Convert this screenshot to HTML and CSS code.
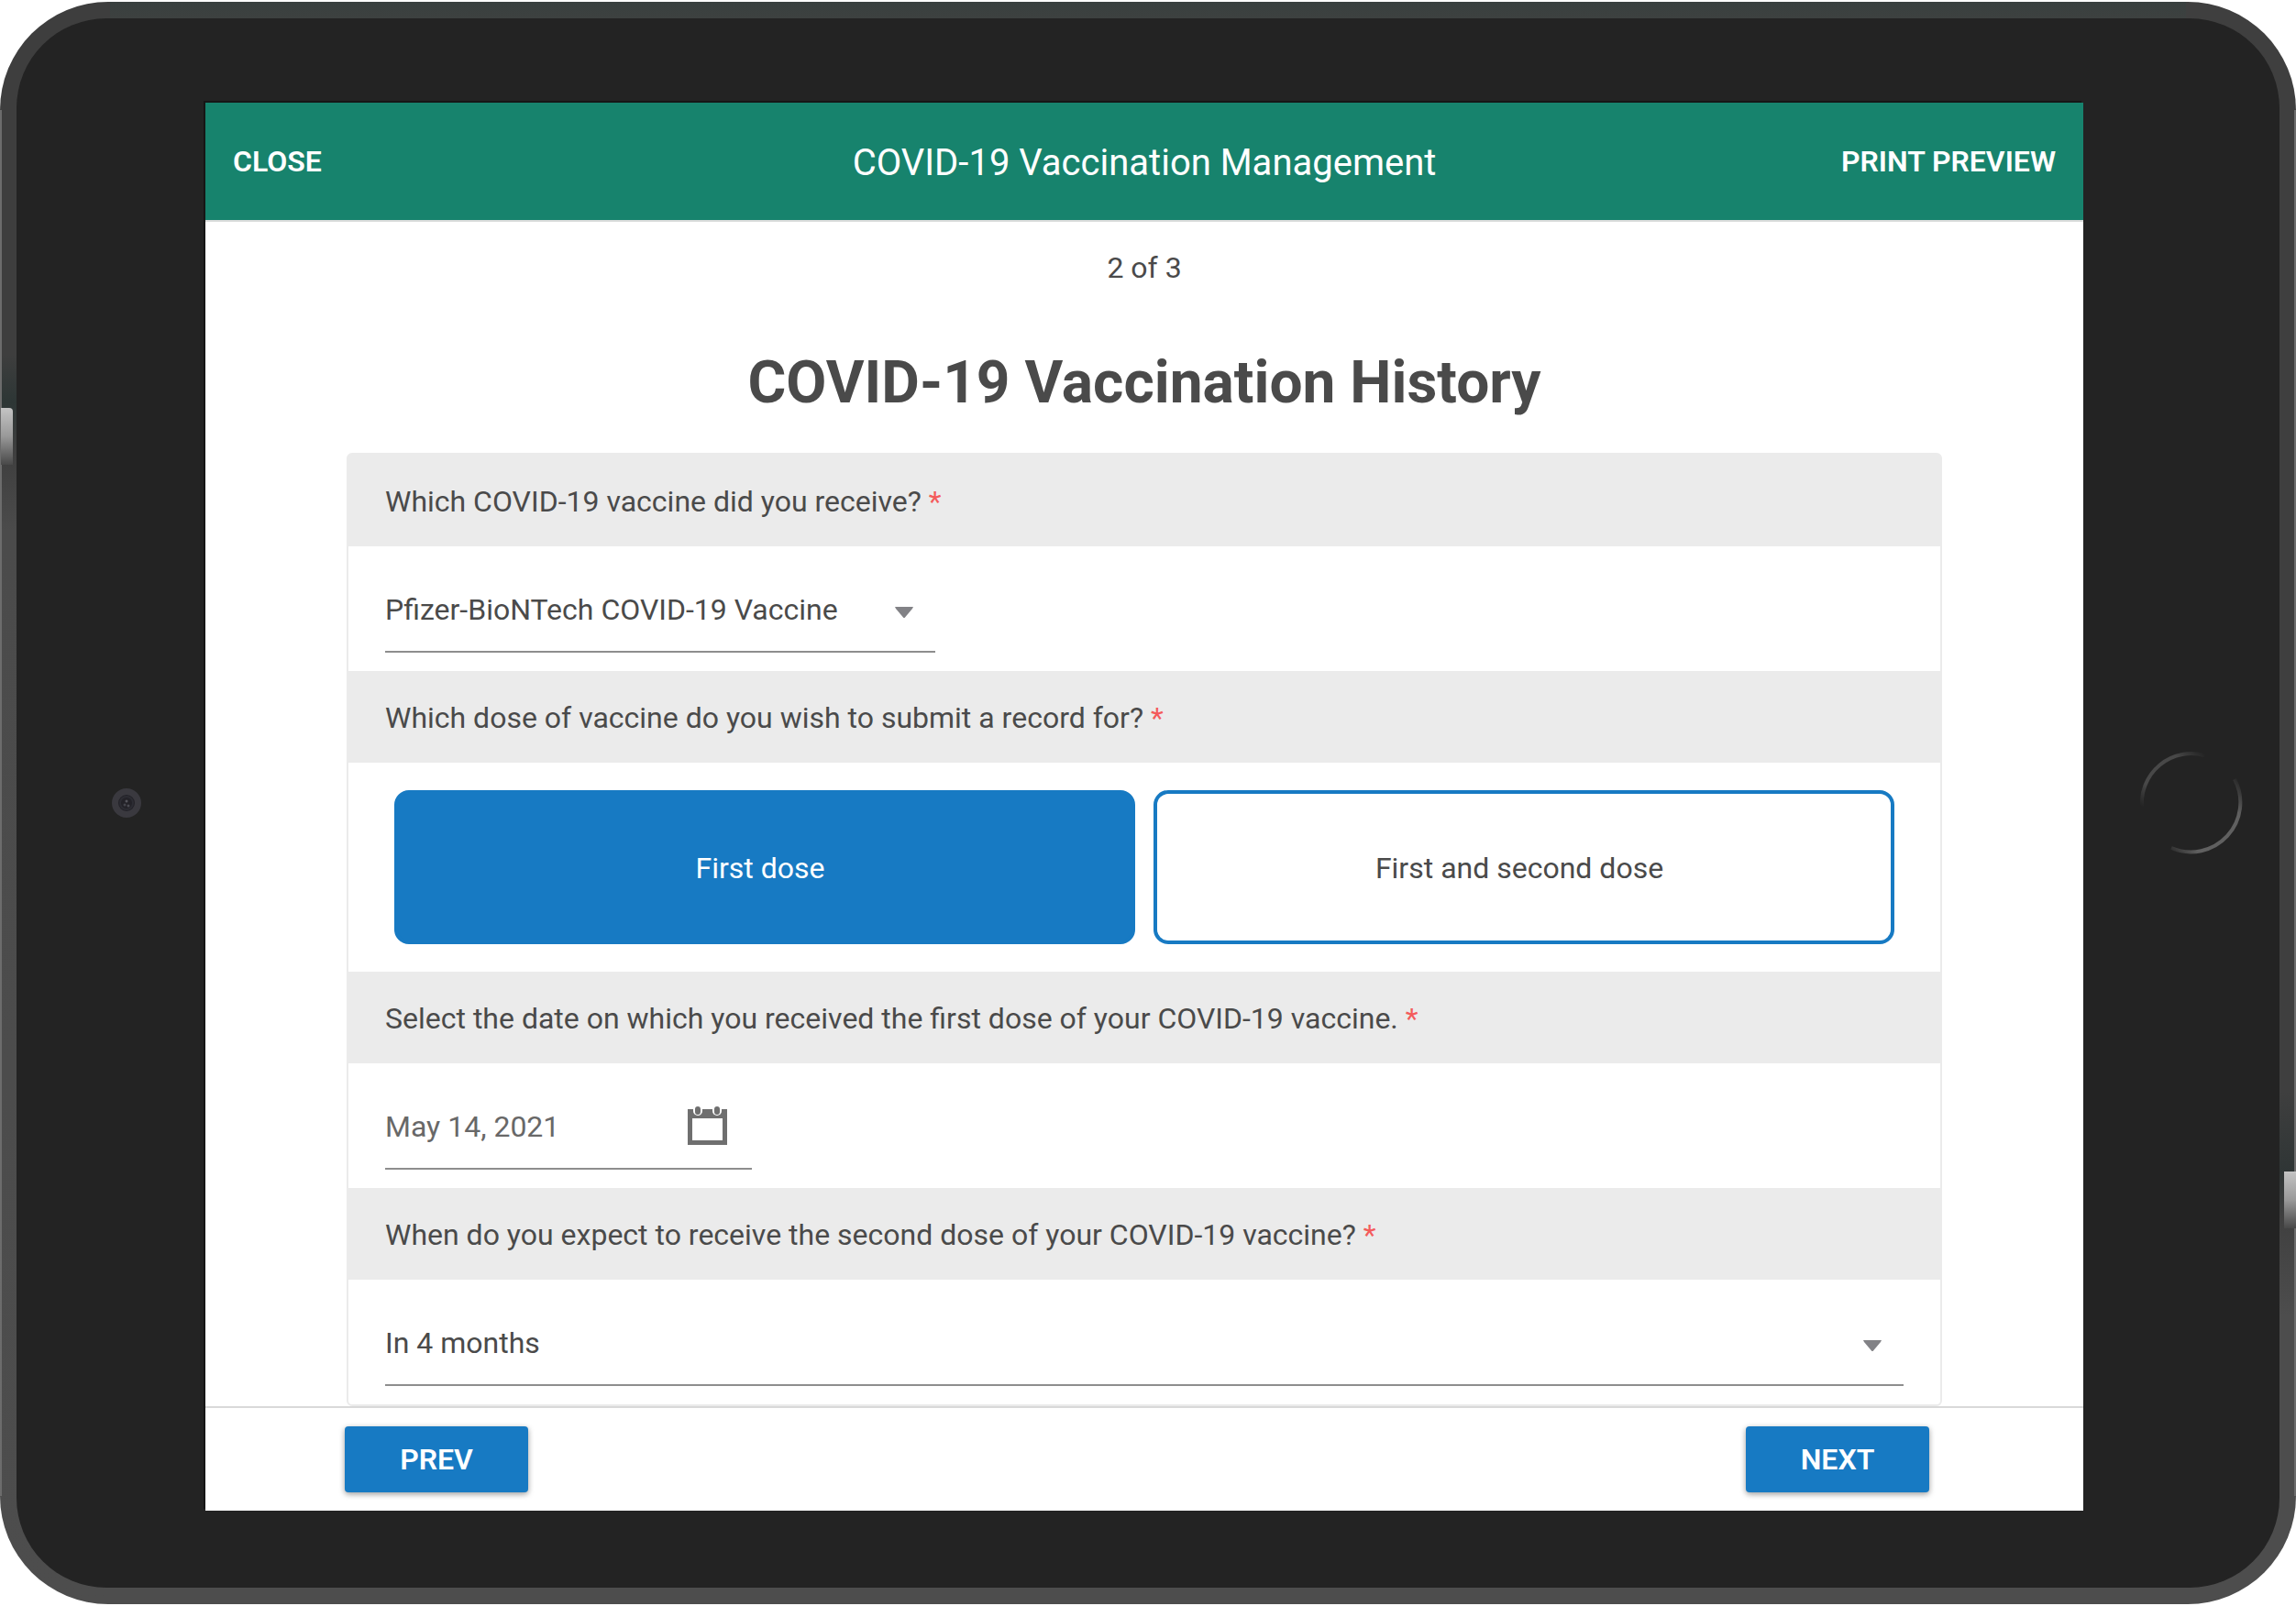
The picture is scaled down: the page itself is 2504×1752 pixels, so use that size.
FILE: index.html
```
<!DOCTYPE html>
<html lang="en">
<head>
<meta charset="utf-8">
<meta name="viewport" content="width=device-width, initial-scale=1">
<title>COVID-19 Vaccination Management</title>
<link rel="stylesheet" href="styles.css">
</head>
<body>
<div class="tablet">
  <div class="bezel">
    <div class="side side-left">
      <svg class="camera" viewBox="0 0 34 34" aria-hidden="true">
        <circle cx="17" cy="17" r="12.5" fill="#232228" stroke="#3a393f" stroke-width="7"/>
        <circle cx="17" cy="17" r="7" fill="none" stroke="#2c2c33" stroke-width="2"/>
        <circle cx="17" cy="15" r="1.5" fill="#55555c"/>
        <circle cx="15" cy="19" r="1.5" fill="#44444b"/>
        <circle cx="19" cy="20" r="1.5" fill="#4b4b52"/>
      </svg>
    </div>
    <div class="screen">
      <header class="app-bar">
        <button class="bar-action" type="button">CLOSE</button>
        <p class="app-title">COVID-19 Vaccination Management</p>
        <button class="bar-action bar-action-end" type="button">PRINT PREVIEW</button>
      </header>
      <main class="page">
        <p class="progress">2 of 3</p>
        <h1 class="page-title">COVID-19 Vaccination History</h1>
        <form class="card" id="history">
          <label class="question" for="vaccine">Which COVID-19 vaccine did you receive? <span class="required">*</span></label>
          <div class="answer">
            <div class="field field-medium">
              <select class="control" id="vaccine">
                <option>Pfizer-BioNTech COVID-19 Vaccine</option>
              </select>
              <svg class="arrow" viewBox="0 0 20 12" aria-hidden="true"><path d="M0 0h20l-1 2-8 9.500q-1 1-2 0L1 2z" fill="#828286"/></svg>
            </div>
          </div>
          <p class="question" id="dose-label">Which dose of vaccine do you wish to submit a record for? <span class="required">*</span></p>
          <div class="choices" role="group" aria-labelledby="dose-label">
            <button class="choice choice-selected" type="button" aria-pressed="true">First dose</button>
            <button class="choice" type="button" aria-pressed="false">First and second dose</button>
          </div>
          <label class="question" for="first-date">Select the date on which you received the first dose of your COVID-19 vaccine. <span class="required">*</span></label>
          <div class="answer">
            <div class="field field-small">
              <input class="control control-date" id="first-date" type="text" value="May 14, 2021">
              <button class="date-button" type="button" aria-label="Open calendar">
                <svg class="calendar" viewBox="0 0 44 44" aria-hidden="true">
                  <path fill="#6f6f6f" fill-rule="evenodd" d="M0 4h43v39H0zM5 14v24h33V14z"/>
                  <rect x="6" y="-1" width="10" height="12" rx="5" fill="#fff"/>
                  <rect x="27" y="-1" width="10" height="12" rx="5" fill="#fff"/>
                  <rect x="8" y="1" width="6" height="9" rx="3" fill="#6f6f6f"/>
                  <rect x="29" y="1" width="6" height="9" rx="3" fill="#6f6f6f"/>
                </svg>
              </button>
            </div>
          </div>
          <label class="question" for="second-dose">When do you expect to receive the second dose of your COVID-19 vaccine? <span class="required">*</span></label>
          <div class="answer">
            <div class="field">
              <select class="control" id="second-dose">
                <option>In 4 months</option>
              </select>
              <svg class="arrow" viewBox="0 0 20 12" aria-hidden="true"><path d="M0 0h20l-1 2-8 9.500q-1 1-2 0L1 2z" fill="#828286"/></svg>
            </div>
          </div>
        </form>
      </main>
      <footer class="nav-bar">
        <button class="nav-button" type="button">PREV</button>
        <button class="nav-button" type="submit" form="history">NEXT</button>
      </footer>
    </div>
    <div class="side side-right">
      <svg class="home" viewBox="0 0 112 112" aria-hidden="true">
        <defs>
          <linearGradient id="arc-top" x1="0" y1="1" x2="1" y2="0">
            <stop offset="0" stop-color="#232323"/>
            <stop offset="0.250" stop-color="#484848"/>
            <stop offset="0.750" stop-color="#484848"/>
            <stop offset="1" stop-color="#232323"/>
          </linearGradient>
          <linearGradient id="arc-bottom" x1="0" y1="1" x2="1" y2="0">
            <stop offset="0" stop-color="#2c2c2c"/>
            <stop offset="0.200" stop-color="#606060"/>
            <stop offset="0.750" stop-color="#606060"/>
            <stop offset="1" stop-color="#232323"/>
          </linearGradient>
        </defs>
        <path d="M2 60A54 54 0 0 1 70 4" fill="none" stroke="url(#arc-top)" stroke-width="4"/>
        <path d="M34 105A54 54 0 0 0 103 30" fill="none" stroke="url(#arc-bottom)" stroke-width="4"/>
      </svg>
    </div>
  </div>
  <span class="glint glint-left"></span>
  <span class="glint glint-right"></span>
</div>
</body>
</html>
```
FILE: styles.css
```
* {
  box-sizing: border-box;
}

body {
  margin: 0;
  padding: 2px 0;
  background: #fff;
  color: #4a4a4a;
  font-family: Roboto, "Liberation Sans", sans-serif;
  font-size: 32px;
  line-height: 40px;
}

p,
h1 {
  margin: 0;
}

button,
input,
select {
  margin: 0;
  padding: 0;
  border: 0;
  background: none;
  color: inherit;
  font: inherit;
}

/* Tablet casing */
.tablet {
  position: relative;
  display: flex;
  min-height: calc(100vh - 4px);
  padding: 18px;
  border-radius: 118px;
  overflow: hidden;
  background:
    linear-gradient(#39403f, #3d4140) center top / calc(100% - 240px) 18px no-repeat,
    linear-gradient(#4d4d4d, #4d4d4d) center bottom / calc(100% - 240px) 18px no-repeat,
    linear-gradient(#6c6c6c, #6c6c6c) left center / 2px calc(100% - 236px) no-repeat,
    linear-gradient(#6c6c6c, #6c6c6c) right center / 2px calc(100% - 236px) no-repeat,
    linear-gradient(#3e3e3e 22%, #2d3635 25%, #3e3e3e 28%, #4b4b4b 33%, #4d4d4d) left top / 50% 100% no-repeat,
    linear-gradient(#3f3f3f 68%, #2f3535 73%, #404040 76%, #4d4d4d 82%) right top / 50% 100% no-repeat;
}

.bezel {
  flex: 1;
  display: grid;
  grid-template-columns: 206px minmax(0, 1fr) 214px;
  border-radius: 98px;
  background: #232323;
}

.side {
  display: flex;
  align-items: center;
  justify-content: center;
}

.side-left {
  padding-left: 34px;
}

.side-right {
  padding-left: 22px;
}

.camera {
  width: 34px;
  height: 34px;
}

.home {
  width: 112px;
  height: 112px;
}

.glint {
  position: absolute;
  width: 13px;
  height: 62px;
  background: linear-gradient(#c4c4c4, #999 50%, #484848);
}

.glint-left {
  left: 1px;
  top: 25%;
  margin-top: 6px;
  border-top-right-radius: 4px;
}

.glint-right {
  right: 0;
  top: 73%;
}

/* Application */
.screen {
  display: flex;
  flex-direction: column;
  margin: 92px 0 84px;
  background: #fff;
  box-shadow: -2px -2px 0 #161616;
}

.app-bar {
  display: grid;
  grid-template-columns: 1fr auto 1fr;
  align-items: center;
  height: 130px;
  padding: 0 30px;
  border-bottom: 2px solid #dadcdb;
  background: #17836d;
  background-clip: padding-box;
  color: #fff;
}

.bar-action {
  justify-self: start;
  font-weight: 600;
}

.bar-action-end {
  justify-self: end;
}

.app-title {
  padding-top: 4px;
  font-size: 40px;
  line-height: 48px;
}

.page {
  flex: 1;
  padding: 30px 154px 0;
}

.progress {
  text-align: center;
}

.page-title {
  margin: 66px 0 36px;
  font-size: 64px;
  line-height: 80px;
  font-weight: 700;
  text-align: center;
}

.card {
  border: 2px solid #ebebeb;
  border-radius: 6px;
}

.question {
  display: block;
  padding: 31px 40px 29px;
  background: #ebebeb;
}

.required {
  color: #f45b5b;
}

.answer {
  padding: 26px 40px 20px;
}

.field {
  display: grid;
  align-items: center;
  height: 90px;
  border-bottom: 2px solid #8e8e8e;
}

.field-medium {
  max-width: 600px;
}

.field-small {
  max-width: 400px;
}

.control {
  grid-area: 1 / 1;
  width: 100%;
  height: 88px;
  padding-bottom: 2px;
  appearance: none;
  outline: none;
}

.control-date {
  color: #686868;
}

.arrow {
  grid-area: 1 / 1;
  justify-self: end;
  width: 20px;
  height: 12px;
  margin: 4px 24px 0 0;
  pointer-events: none;
}

.date-button {
  grid-area: 1 / 1;
  justify-self: end;
  display: flex;
  margin: 0 26px 4px 0;
}

.calendar {
  width: 44px;
  height: 44px;
}

.choices {
  display: grid;
  grid-template-columns: 1fr 1fr;
  gap: 20px;
  padding: 30px 50px;
}

.choice {
  height: 168px;
  padding: 2px 10px 0 0;
  border: 4px solid #177ac3;
  border-radius: 16px;
}

.choice-selected {
  background: #177ac3;
  color: #fff;
}

.nav-bar {
  display: flex;
  justify-content: space-between;
  padding: 20px 168px 20px 152px;
  border-top: 2px solid #d9d9d9;
}

.nav-button {
  width: 200px;
  height: 72px;
  border-radius: 4px;
  background: #177ac3;
  box-shadow: 0 2px 6px rgba(0, 0, 0, 0.4);
  color: #fff;
  font-weight: 600;
}
```
